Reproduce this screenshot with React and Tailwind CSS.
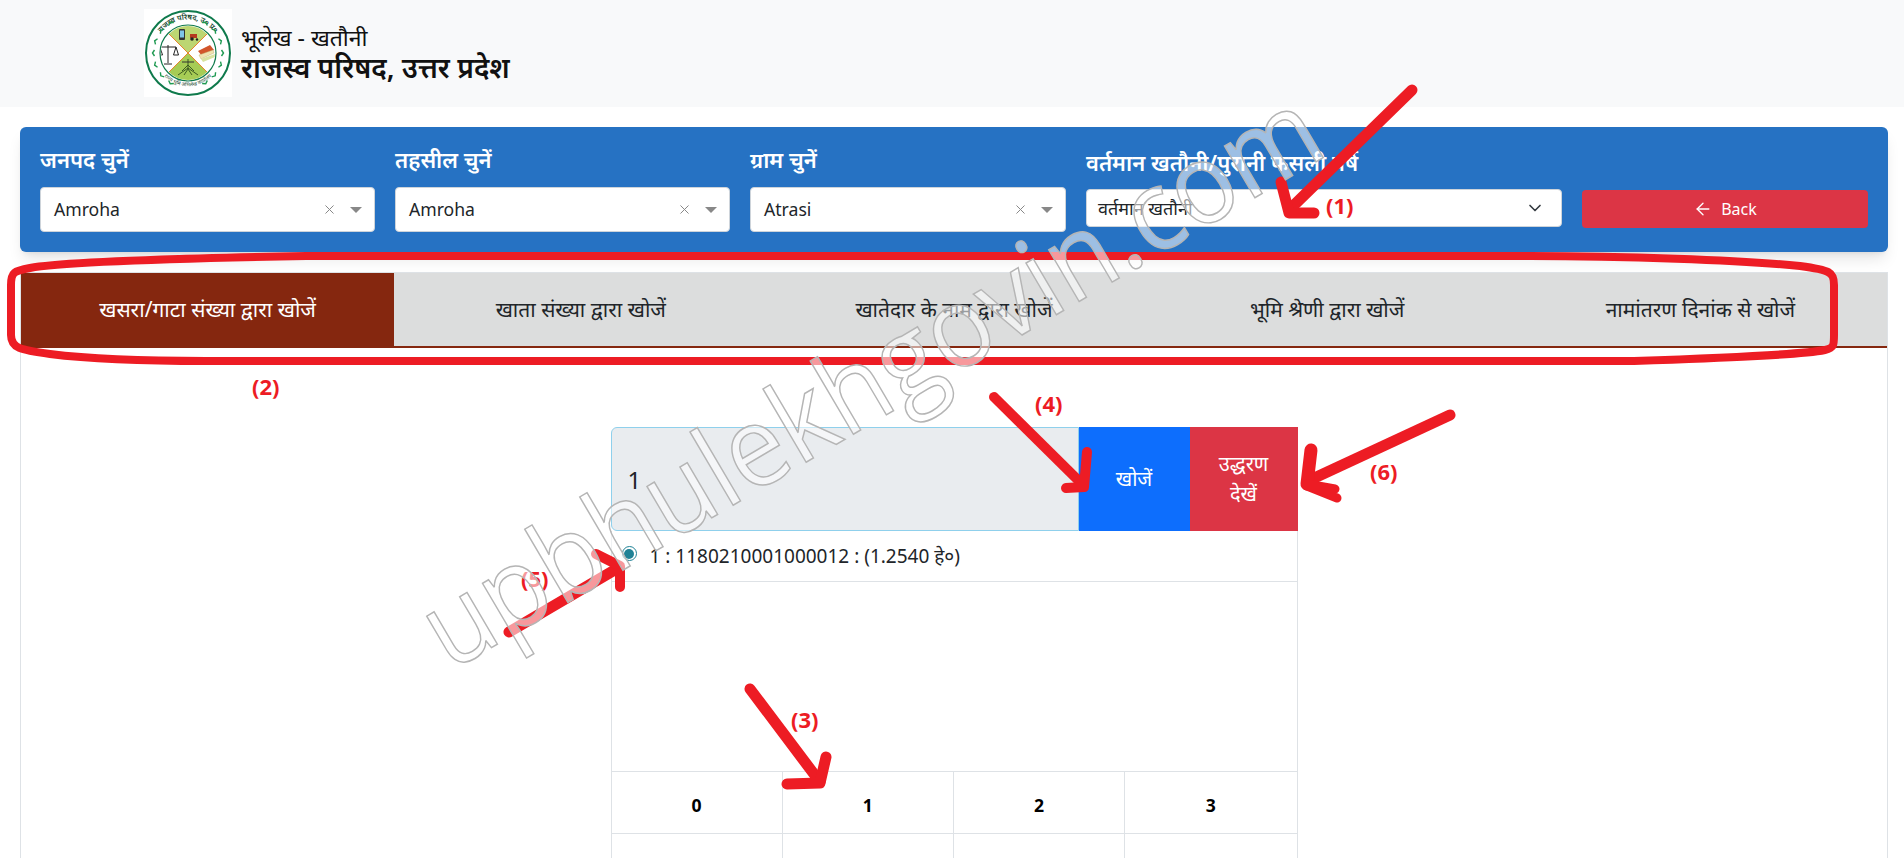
import { ChevronDown, ArrowLeft, X } from 'lucide-react'

const tabs = [
  'खसरा/गाटा संख्या द्वारा खोजें',
  'खाता संख्या द्वारा खोजें',
  'खातेदार के नाम द्वारा खोजें',
  'भूमि श्रेणी द्वारा खोजें',
  'नामांतरण दिनांक से खोजें',
]

const wreathAngles = [0, 1, 2, 3, 4, 5, 6]

const Logo = () => (
  <svg viewBox="0 0 88 88" className="w-[88px] h-[88px] bg-white shrink-0">
    <defs>
      <path id="ringTop" d="M 10.5 44 A 33.5 33.5 0 0 1 77.5 44" />
      <path id="ringBottom" d="M 14 58 A 33 33 0 0 0 74 58" />
      <clipPath id="inner"><circle cx="44" cy="44" r="27" /></clipPath>
    </defs>
    <circle cx="44" cy="44" r="42" fill="#fff" stroke="#0f7a4c" strokeWidth="2" />
    <circle cx="44" cy="44" r="28" fill="#fff" stroke="#0f7a4c" strokeWidth="1.2" />
    <text fontSize="7.5" fontWeight="600" fill="#1d4a32"><textPath href="#ringTop" startOffset="50%" textAnchor="middle">राजस्व परिषद, उ० प्र०</textPath></text>
    <text fontSize="5" fill="#1d4a32"><textPath href="#ringBottom" startOffset="50%" textAnchor="middle">राज्य भूमि अभिलेख कार्यालय</textPath></text>
    {wreathAngles.map((i) => (
      <g key={i} stroke="#1f9a52" strokeWidth="1.4" fill="none">
        <path d="M-3 -1.5 L0 0.5 L3 -1.5" transform={`rotate(${-60 + i * 20} 44 44) translate(9 44) rotate(90)`} />
        <path d="M-3 -1.5 L0 0.5 L3 -1.5" transform={`rotate(${60 - i * 20} 44 44) translate(79 44) rotate(-90)`} />
      </g>
    ))}
    <g clipPath="url(#inner)">
      <polygon points="44,44 16,16 72,16" fill="#bcd672" />
      <polygon points="44,44 16,72 72,72" fill="#a6cc55" />
      <path d="M16 16 L72 72 M72 16 L16 72" stroke="#e8842c" strokeWidth="1" />
      <rect x="35" y="20" width="6" height="11" rx="1" fill="#333" />
      <rect x="36" y="21.5" width="4" height="7" fill="#7fc4e8" />
      <rect x="46" y="25" width="7" height="4" fill="#b5381f" />
      <circle cx="48" cy="30" r="1.8" fill="#222" />
      <circle cx="53" cy="30.5" r="1.2" fill="#222" />
      <path d="M44 50 L44 60 M38 62 L44 56 L50 62 M34 66 L44 59 L54 66 M40 66 L44 60 L48 66" stroke="#3c5a22" strokeWidth="1" fill="none" />
      <path d="M38 53 L50 53" stroke="#333" strokeWidth="1.2" />
      <path d="M24 36 L24 54 M20 55 L28 55 M16 38 L32 38 M16 38 L13.5 46 L18.5 46 Z M32 38 L29.5 46 L34.5 46 Z" stroke="#222" strokeWidth="1" fill="none" />
      <polygon points="54,42 66,36 70,41 58,47" fill="#d2552b" />
      <polygon points="55,46 69,41 70,44 57,50" fill="#efe3b0" stroke="#b9a868" strokeWidth="0.4" />
      <polygon points="57,50 71,45 71,48 59,53" fill="#d8e3a0" />
    </g>
  </svg>
)

const SearchSelect = ({ label, value, width }) => (
  <div className={width}>
    <label className="block mb-[14px] text-[22px] leading-[28px] font-semibold text-white">{label}</label>
    <div className="h-[45px] bg-white rounded border border-[#ced4da] flex items-center pl-[13px] pr-[12px] text-[17.6px] text-[#212529]">
      <span className="flex-1">{value}</span>
      <X className="w-[15px] h-[15px] text-[#888] mr-[13px]" strokeWidth={1.6} />
      <span className="w-0 h-0 border-x-[6px] border-x-transparent border-t-[6px] border-t-[#888]" />
    </div>
  </div>
)

const Note = ({ text, className }) => (
  <span className={`absolute text-[22px] leading-none font-bold text-[#ed1c24] ${className}`}>{text}</span>
)

// hand drawn markup that sits on top of the page
const Markup = () => (
  <svg className="absolute inset-0 pointer-events-none" width="1904" height="858" viewBox="0 0 1904 858" fill="none">
    <g stroke="#ed1c24" strokeLinecap="round" strokeLinejoin="round">
      <path strokeWidth="8" d="M306 256 C200 258 60 262 30 268 C14 271 11 272 11 285 L11 335 C11 348 20 350 50 354 C90 359 150 361 206 361 L1634 361 C1720 358 1800 355 1825 350 C1834 348 1834 345 1834 335 L1834 285 C1834 272 1830 270 1800 266 C1740 260 1620 256 1530 256 Z" />
      <path strokeWidth="11" d="M1412 90 L1289 210" />
      <path strokeWidth="11" d="M1281 182 L1289 213 L1314 213" />
      <path strokeWidth="10" d="M994 397 L1082 484" />
      <path strokeWidth="10" d="M1087 452 L1084 487 L1066 488" />
      <path strokeWidth="11" d="M1450 415 L1310 480" />
      <path strokeWidth="13" d="M1311 450 L1307 484" />
      <path strokeWidth="9" d="M1307 484 L1335 489 M1307 486 L1337 498" />
      <path strokeWidth="11" d="M509 632 L618 568" />
      <path strokeWidth="10" d="M596 554 L620 566 L620 587" />
      <path strokeWidth="11" d="M750 689 L820 782" />
      <path strokeWidth="11" d="M826 757 L820 783 L787 784" />
    </g>
    <text
      x="0"
      y="0"
      transform="translate(450 672) rotate(-30.5)"
      textLength="1022"
      lengthAdjust="spacingAndGlyphs"
      fontFamily="'Open Sans','Noto Sans',sans-serif"
      fontWeight="400"
      fontSize="112"
      fill="#ffffff"
      fillOpacity="0.55"
      stroke="#b5b5b5"
      strokeWidth="1.5"
    >
      upbhulekhgovin.com
    </text>
  </svg>
)

export default function App() {
  return (
    <div className='relative h-[858px] flex flex-col overflow-hidden bg-white font-["Noto_Sans","Liberation_Sans",sans-serif]'>
      <header className="h-[107px] shrink-0 bg-[#f8f9fa] pl-[144px] pt-[9px] flex items-start">
        <Logo />
        <div className="ml-[9px] mt-[14px] text-[#111]">
          <div className="text-[23px] leading-[28px]">भूलेख - खतौनी</div>
          <div className="text-[28px] leading-[32px] font-semibold">राजस्व परिषद, उत्तर प्रदेश</div>
        </div>
      </header>

      <section className="mx-[20px] mt-[20px] w-[1868px] h-[125px] shrink-0 bg-[#2672c3] rounded-md shadow-lg flex gap-[20px] px-[20px] pt-[18px]">
        <SearchSelect label="जनपद चुनें" value="Amroha" width="w-[335px]" />
        <SearchSelect label="तहसील चुनें" value="Amroha" width="w-[335px]" />
        <SearchSelect label="ग्राम चुनें" value="Atrasi" width="w-[316px]" />
        <div className="w-[476px] pt-[3px]">
          <label className="block mb-[13px] text-[22px] leading-[28px] font-semibold text-white">वर्तमान खतौनी/पुरानी फसली वर्ष</label>
          <div className="h-[38px] bg-white rounded border border-[#ced4da] flex items-center pl-[11px] pr-[16px] text-[18px] text-[#212529]">
            <span className="flex-1">वर्तमान खतौनी</span>
            <ChevronDown className="w-[20px] h-[20px] text-[#343a40]" strokeWidth={2} />
          </div>
        </div>
        <button className="w-[286px] h-[38px] mt-[45px] bg-[#dc3545] rounded flex items-center justify-center gap-[8px] text-[16px] text-white">
          <ArrowLeft className="w-[20px] h-[20px]" strokeWidth={1.6} />
          Back
        </button>
      </section>

      <main className="mx-[20px] mt-[20px] w-[1868px] flex-1 flex flex-col border-x border-t border-[#dee2e6]">
        <div className="flex h-[75px] shrink-0 bg-[#dcdddd] border-b-2 border-[#85270f]">
          {tabs.map((t, i) => (
            <div key={t} className={`flex-1 flex items-center justify-center text-[21px] ${i === 0 ? 'bg-[#85270f] text-white' : 'text-[#212529]'}`}>{t}</div>
          ))}
        </div>

        <div className="w-[687px] mx-auto mt-[79px] flex-1 flex flex-col">
          <div className="flex h-[104px] shrink-0">
            <div className="flex-1 flex items-center pl-[16px] pt-[2px] bg-[#e9ecef] border border-[#8fd0ec] rounded-l-md text-[24px] text-[#212529]">1</div>
            <button className="w-[111px] bg-[#0d6efd] text-white text-[20px]">खोजें</button>
            <button className="w-[108px] bg-[#dc3545] text-white text-[20px] leading-[30px] px-[20px]">उद्धरण देखें</button>
          </div>

          <div className="flex-1 flex flex-col border-x border-[#dee2e6]">
            <div className="h-[51px] shrink-0 flex items-center gap-[13px] pl-[10px] border-b border-[#dee2e6] text-[19px] text-[#212529]">
              <span className="w-[15px] h-[15px] rounded-full border border-[#1f8296] bg-white flex items-center justify-center mb-[5px]">
                <span className="w-[10px] h-[10px] rounded-full bg-[#1f8296]" />
              </span>
              <span>1 : 1180210001000012 : (1.2540 हे०)</span>
            </div>
            <div className="h-[189px] shrink-0" />
            <div className="flex-1 grid grid-cols-4 grid-rows-[62px_1fr] border-t border-[#dee2e6]">
              {[0, 1, 2, 3].map((n) => (
                <div key={n} className={`flex items-center justify-center pt-[6px] border-b border-[#dee2e6] text-[17.6px] font-bold text-black ${n < 3 ? 'border-r' : ''}`}>{n}</div>
              ))}
              {[0, 1, 2, 3].map((n) => (
                <div key={n} className={`border-[#dee2e6] ${n < 3 ? 'border-r' : ''}`} />
              ))}
            </div>
          </div>
        </div>
      </main>

      <Note text="(1)" className="left-[1326px] top-[194px]" />
      <Note text="(2)" className="left-[252px] top-[375px]" />
      <Note text="(3)" className="left-[791px] top-[708px]" />
      <Note text="(4)" className="left-[1035px] top-[392px]" />
      <Note text="(5)" className="left-[521px] top-[567px]" />
      <Note text="(6)" className="left-[1370px] top-[460px]" />
      <Markup />
    </div>
  )
}
